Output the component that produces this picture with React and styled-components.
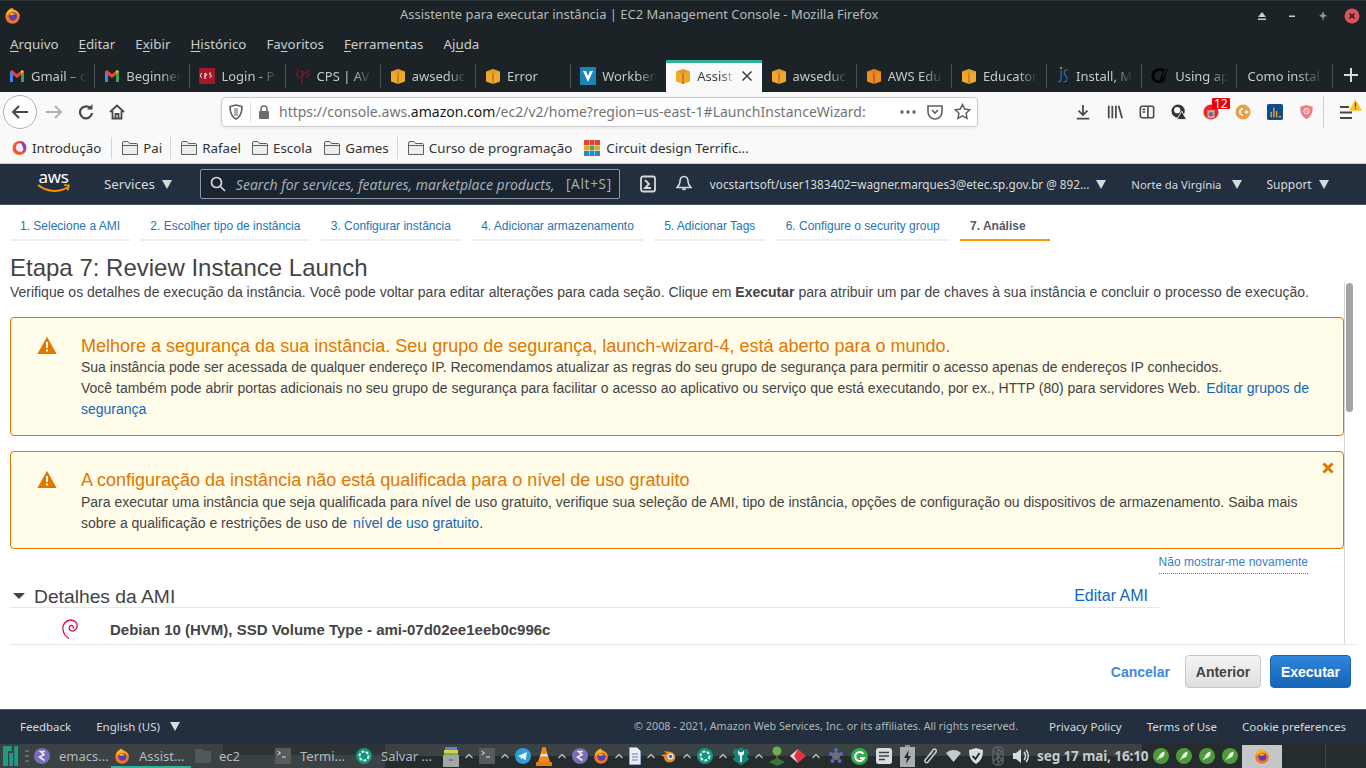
import React from 'react';
import styled, { createGlobalStyle } from 'styled-components';

const GlobalStyle = createGlobalStyle`
  html, body { margin: 0; padding: 0; background: #fff; overflow: hidden; }
  * { box-sizing: border-box; }
`;

const UI = `'Noto Sans', sans-serif`;
const WEB = `'Liberation Sans', Arial, sans-serif`;

const Page = styled.div`
  width: 1366px;
  height: 768px;
  display: flex;
  flex-direction: column;
  overflow: hidden;
  font-family: ${WEB};
`;

/* window chrome */
const TitleBar = styled.div`
  height: 30px;
  flex: none;
  background: #1b2326;
  border-top: 1px solid #2d3639;
  display: flex;
  align-items: center;
  position: relative;
  padding-left: 4px;
  color: #b4babc;
  font: 12.95px ${UI};
`;
const TitleText = styled.div`
  position: absolute;
  left: 400px;
  top: 4px;
  white-space: nowrap;
`;
const WindowButtons = styled.div`
  margin-left: auto;
  display: flex;
  align-items: center;
  gap: 14px;
  padding-right: 6px;
`;
const MenuBar = styled.div`
  height: 30px;
  flex: none;
  background: #1b2326;
  display: flex;
  align-items: center;
  gap: 20px;
  padding: 0 0 2px 10px;
  color: #c9cecf;
  font: 13.33px ${UI};
  u { text-underline-offset: 2px; }
`;
const TabStrip = styled.div`
  height: 32px;
  flex: none;
  background: #1b2326;
  display: flex;
  align-items: stretch;
`;
const Tab = styled.div`
  width: 95.2px;
  flex: none;
  display: flex;
  align-items: center;
  gap: 6px;
  padding: 0 9px 3px;
  position: relative;
  font: 13px ${UI};
  color: ${p => (p.$active ? '#3b3f42' : '#c4c9ca')};
  background: ${p => (p.$active ? '#f9f9fa' : 'transparent')};
  border-top: 3px solid ${p => (p.$active ? '#2eb398' : 'transparent')};
  svg { flex: none; }
  &::after {
    content: '';
    display: ${p => (p.$sep ? 'block' : 'none')};
    position: absolute;
    right: 0;
    top: 1px;
    bottom: 4px;
    width: 1px;
    background: #4c5457;
  }
`;
const TabTitle = styled.span`
  flex: 1;
  overflow: hidden;
  white-space: nowrap;
  margin-left: ${p => (p.$plain ? '1px' : '0')};
  mask-image: linear-gradient(to right, #000 65%, transparent 100%);
`;
const NewTab = styled.div`
  flex: 1;
  display: flex;
  align-items: center;
  justify-content: center;
  padding: 0 0 3px 4px;
`;
const NavBar = styled.div`
  height: 39px;
  flex: none;
  background: #f9f9fa;
  display: flex;
  align-items: center;
  padding-left: 3px;
`;
const BackButton = styled.div`
  width: 34px;
  height: 34px;
  border-radius: 50%;
  border: 1px solid #b1b1b3;
  background: #fff;
  display: flex;
  align-items: center;
  justify-content: center;
  flex: none;
`;
const NavIcons = styled.div`
  display: flex;
  align-items: center;
  gap: 15px;
  padding-left: 8px;
  flex: none;
`;
const UrlBar = styled.div`
  width: 757px;
  height: 30px;
  margin-left: 96px;
  flex: none;
  background: #fff;
  border: 1px solid #ccc;
  border-radius: 4px;
  box-shadow: 0 1px 3px rgba(0, 0, 0, 0.08);
  display: flex;
  align-items: center;
  padding: 0 6px 0 7px;
  gap: 7px;
  font: 14px ${UI};
  color: #737373;
  white-space: nowrap;
  svg { flex: none; }
`;
const UrlDivider = styled.span`
  width: 1px;
  height: 20px;
  background: #e0e0e1;
`;
const UrlText = styled.span`
  flex: 1;
  overflow: hidden;
  margin-left: 2px;
  b { font-weight: 400; color: #17181a; }
`;
const UrlActions = styled.div`
  display: flex;
  align-items: center;
  gap: 11px;
`;
const Toolbar = styled.div`
  margin-left: 97px;
  display: flex;
  align-items: center;
  gap: 16px;
  flex: none;
`;
const ToolbarSep = styled.span`
  width: 1px;
  height: 32px;
  background: #cfcfd1;
  margin: 0 -1px 0 -7px;
`;
const IconSlot = styled.div`
  position: relative;
  width: 16px;
  height: 16px;
`;
const Badge = styled.span`
  position: absolute;
  top: -6px;
  left: 9px;
  background: #e8000c;
  color: #fff;
  font: 12px/11px ${UI};
  padding: 0 2px;
  border-radius: 1px;
`;
const Warn = styled.svg`
  position: absolute;
  top: -5px;
  left: 10px;
`;
const Bookmarks = styled.div`
  height: 33px;
  flex: none;
  background: #f9f9fa;
  border-bottom: 1px solid #c9cacc;
  display: flex;
  align-items: center;
  padding: 2px 0 0 12px;
  font: 13.33px ${UI};
  color: #2f3335;
  white-space: nowrap;
`;
const Bookmark = styled.div`
  display: flex;
  align-items: center;
  gap: 5px;
  margin-right: ${p => p.$mr}px;
`;
const BookSep = styled.span`
  width: 1px;
  height: 22px;
  background: #d4d4d6;
  margin: 0 10px 0 0;
`;

/* aws header */
const AwsNav = styled.div`
  height: 41px;
  flex: none;
  background: #232f3e;
  border-bottom: 1px solid #46505c;
  display: flex;
  align-items: center;
  padding-left: 37px;
  color: #d5dbdb;
  font: 12px ${UI};
  white-space: nowrap;
`;
const Logo = styled.div`
  width: 33px;
  height: 30px;
  position: relative;
  color: #fff;
  font: 17px/20px ${UI};
  text-align: center;
  letter-spacing: -0.3px;
  margin-right: 34px;
  flex: none;
  top: -2px;
`;
const Smile = styled.svg`
  position: absolute;
  left: 0;
  top: 17px;
`;
const NavItem = styled.div`
  display: flex;
  align-items: center;
  gap: 6px;
  flex: none;
  margin-left: ${p => p.$ml || 0}px;
  margin-right: ${p => p.$mr || 0}px;
  font-size: ${p => p.$fs || 12}px;
`;
const Caret = styled.span`
  width: 0;
  height: 0;
  flex: none;
  border-left: 5px solid transparent;
  border-right: 5px solid transparent;
  border-top: 9px solid #d5dbdb;
  margin-left: ${p => p.$ml || 0}px;
`;
const SearchBox = styled.div`
  width: 420px;
  height: 30px;
  margin-left: 28px;
  flex: none;
  background: #1b2431;
  border: 1px solid #8d97a3;
  border-radius: 2px;
  display: flex;
  align-items: center;
  padding: 0 7px 0 9px;
  gap: 10px;
  color: #a5adb5;
  font-size: 14px;
  em { flex: 1; overflow: hidden; }
  span { letter-spacing: 0.7px; font-size: 13.5px; }
`;

/* wizard */
const Main = styled.div`
  flex: 1;
  min-height: 0;
  display: flex;
  flex-direction: column;
  background: #fff;
`;
const Steps = styled.div`
  display: flex;
  gap: 10.3px;
  padding: 7px 0 0 10px;
`;
const Step = styled.div`
  height: 29px;
  padding: ${p => (p.$active ? '0 24px 0 10px' : '0 10px')};
  display: flex;
  align-items: center;
  font: ${p => (p.$active ? 'bold' : 'normal')} 12px ${WEB};
  color: ${p => (p.$active ? '#545b64' : '#2574b8')};
  border-bottom: 2px solid ${p => (p.$active ? '#ff9900' : '#eeeeee')};
`;
const Heading = styled.h1`
  margin: 13px 0 0 10px;
  height: 29px;
  font: 400 24px/27px ${WEB};
  color: #444;
`;
const ScrollArea = styled.div`
  width: 1346px;
  height: 362px;
  margin-left: 10px;
  flex: none;
  position: relative;
  overflow: hidden;
  &::after {
    content: '';
    position: absolute;
    left: 1334px;
    top: 0;
    bottom: 0;
    width: 1px;
    background: #d8d8d8;
  }
`;
const ScrollThumb = styled.div`
  position: absolute;
  left: 1336px;
  top: 1px;
  width: 7px;
  height: 129px;
  border-radius: 4px;
  background: #a3a5a5;
`;
const Intro = styled.p`
  margin: 0;
  font: 14px/20px ${WEB};
  color: #444;
  white-space: nowrap;
`;
const Alert = styled.div`
  width: 1334px;
  height: ${p => p.$h}px;
  margin-top: ${p => p.$mt}px;
  position: relative;
  background: #fffcea;
  border: 1px solid #e07700;
  border-radius: 4px;
  padding: 18px 20px 0 70px;
  color: #444;
  font: 14px/21px ${WEB};
  a { color: #1166bb; margin-left: 2px; }
`;
const AlertIcon = styled.svg`
  position: absolute;
  left: 26px;
  top: 18px;
`;
const CloseIcon = styled.svg`
  position: absolute;
  right: 9px;
  top: 10px;
`;
const AlertTitle = styled.div`
  font: 18px/21px ${WEB};
  color: #e07700;
  margin-bottom: ${p => p.$gap || 0}px;
`;
const DontShow = styled.div`
  display: flex;
  justify-content: flex-end;
  padding: 6px 48px 0 0;
  a {
    font: 12px/15px ${WEB};
    color: #3b7fc4;
    padding-bottom: 3px;
    border-bottom: 1px dotted #3b7fc4;
  }
`;
const Section = styled.div`
  width: 1149px;
  height: 23px;
  margin-top: 11px;
  display: flex;
  align-items: center;
  border-bottom: 1px solid #e8e8e8;
  padding: 0 11px 0 3px;
`;
const Triangle = styled.span`
  width: 0;
  height: 0;
  border-left: 6px solid transparent;
  border-right: 6px solid transparent;
  border-top: 6px solid #444;
  margin-right: 9px;
`;
const SectionTitle = styled.span`
  font: 19.25px/24px ${WEB};
  color: #444;
  flex: 1;
  padding-top: 1px;
`;
const EditLink = styled.a`
  font: 16px/24px ${WEB};
  color: #1166bb;
`;
const AmiRow = styled.div`
  display: flex;
  align-items: center;
  height: 42px;
  padding-left: 51px;
  gap: 31px;
  font: bold 15px ${WEB};
  color: #444;
`;
const Actions = styled.div`
  margin: 0 10px;
  height: 65px;
  flex: none;
  border-top: 1px solid #e8e8e8;
  display: flex;
  justify-content: flex-end;
  align-items: flex-start;
  padding: 10px 5px 0 0;
  gap: 9px;
`;
const CancelLink = styled.a`
  font: bold 14px/34px ${WEB};
  color: #3f8ae0;
  margin-right: 6px;
`;
const Button = styled.div`
  height: 33px;
  width: ${p => p.$w}px;
  border-radius: 4px;
  display: flex;
  align-items: center;
  justify-content: center;
  font: bold 14px ${WEB};
  color: ${p => (p.$primary ? '#fff' : '#444')};
  border: 1px solid ${p => (p.$primary ? '#1a66b3' : '#c6c6c6')};
  background: ${p =>
    p.$primary
      ? 'linear-gradient(#2f86dd, #1664b4)'
      : 'linear-gradient(#f4f4f4, #dfdfdf)'};
`;

/* footers */
const Footer = styled.div`
  height: 35px;
  flex: none;
  background: #232f3e;
  border-top: 1px solid #545b64;
  display: flex;
  align-items: center;
  padding: 0 20px 2px;
  color: #d5dbdb;
  font: 11.5px ${UI};
  white-space: nowrap;
`;
const Copyright = styled.span`
  color: #aab7b8;
  font-size: 10.75px;
  margin-left: auto;
  margin-right: 31px;
`;
const FooterLink = styled.span`
  margin-left: 25px;
`;
const Taskbar = styled.div`
  height: 24px;
  flex: none;
  background:
    linear-gradient(#2c3436, #2c3436) 223px 0 / 162px 11px no-repeat,
    linear-gradient(#3a4244, #3a4244) 0 0 / 385px 100% no-repeat,
    linear-gradient(#3a4244, #3a4244) 385px 0 / 757px 12px no-repeat,
    #252c2e;
  display: flex;
  align-items: center;
  color: #b3b9ba;
  font: 13px ${UI};
  white-space: nowrap;
  position: relative;
  padding-left: 3px;
  svg { flex: none; }
`;
const TaskDots = styled.svg`
  margin: 0 5px 0 7px;
`;
const TaskItem = styled.div`
  display: flex;
  align-items: center;
  gap: ${p => p.$gap || 9}px;
  height: 24px;
  flex: none;
  width: ${p => p.$w}px;
  padding: 2px 0 0 ${p => p.$pl ?? 3}px;
  border-bottom: 2px solid ${p => (p.$active ? '#2eb398' : 'transparent')};
`;
const Tray = styled.div`
  display: flex;
  align-items: center;
  gap: ${p => p.$gap}px;
  margin-left: ${p => p.$ml}px;
  flex: none;
`;
const Clock = styled.span`
  font-weight: 700;
  font-size: 13.5px;
  color: #c6cbcc;
  margin-right: -3px;
  letter-spacing: -0.1px;
`;
const Thumbnail = styled.div`
  width: 40px;
  height: 23px;
  margin-left: 4px;
  background: #c3c7c8;
  display: flex;
  align-items: center;
  justify-content: center;
  flex: none;
`;
const TaskEnd = styled.span`
  position: absolute;
  left: 1325px;
  top: 0;
  bottom: 0;
  width: 1px;
  background: #3d4547;
`;

/* drawings */
const Firefox = ({ size = 16 }) => (
  <svg width={size} height={size} viewBox="0 0 16 16">
    <circle cx="8" cy="9" r="6.800" fill="#f4722b" />
    <path d="M2 8C2 4 5 1.500 8 .6c0 2 2 2.400 4 3.600 2 1.400 3 3 2.800 4.800-2-5-8-6-12.800-1z" fill="#ffb01f" />
    <circle cx="8.400" cy="8.800" r="3.900" fill="#5b3fb0" />
    <path d="M5 6.500c2-1.600 5-1 6 1-1-.4-3-.6-4 .4z" fill="#ffbd2e" />
  </svg>
);
const Gmail = () => (
  <svg width="16" height="16" viewBox="0 0 16 16">
    <path d="M1 3.500V14h3V7l4 3 4-3v7h3V3.500L13 2 8 6 3 2z" fill="#ea4335" />
    <path d="M1 3.500V14h3V6z" fill="#4285f4" />
    <path d="M15 3.500V14h-3V6z" fill="#34a853" />
    <path d="M12 6l3-2.500L13 2l-1 .8z" fill="#fbbc04" />
  </svg>
);
const Cube = ({ color = '#f0a92e', dark = '#c9851d' }) => (
  <svg width="16" height="17" viewBox="0 0 16 17">
    <path d="M8 1l7 2.500v10L8 16l-7-2.500v-10z" fill={color} />
    <path d="M7 5.200h2V16H7z" fill={dark} />
    <path d="M1 3.500L8 5.800l7-2.300-7-2.500z" fill={dark} opacity=".35" />
  </svg>
);
const CpsSolid = () => (
  <svg width="16" height="16" viewBox="0 0 16 16">
    <rect width="16" height="16" fill="#a5182a" />
    <path d="M3 5c-2 1-2 4 0 5M6 5v6M6 5.500c2-1 2 3 0 2.500M12 5c-2-.5-2 1.500-.5 2s1 2.500-1 2" fill="none" stroke="#fff" strokeWidth="1" />
  </svg>
);
const CpsLine = () => (
  <svg width="16" height="16" viewBox="0 0 16 16">
    <path d="M4 2C1 4 1 8 4 10M7 3v12M7 3.500c3-1 3 4 0 3.500M14 3c-3-.5-3 2-1 2.500s1 3.500-2 3" fill="none" stroke="#a5182a" strokeWidth="1" />
  </svg>
);
const Workbench = () => (
  <svg width="16" height="18" viewBox="0 0 16 18">
    <rect width="16" height="18" fill="#1a86b8" />
    <path d="M3 4l5 11 5-11h-3l-2 5-2-5z" fill="#fff" />
  </svg>
);
const JsLogo = () => (
  <svg width="14" height="18" viewBox="0 0 14 18">
    <path d="M5 3v9c0 2-1 3-3 3" fill="none" stroke="#2f6db5" strokeWidth="1.200" />
    <path d="M12 3C8 2 7 6 9.500 8.500s2 6-2 6.500" fill="none" stroke="#2f6db5" strokeWidth="1.200" />
    <circle cx="5" cy="1" r="1" fill="#e8a33d" />
  </svg>
);
const CIcon = () => (
  <svg width="18" height="16" viewBox="0 0 18 16">
    <path d="M13 3C8-1 1 3 2 9c.6 4 5 6 9 4l2-4" fill="none" stroke="#050505" strokeWidth="3" />
    <path d="M9 14L13 1M12 14l4-13" stroke="#050505" strokeWidth="1.500" />
  </svg>
);
const Tinker = () => (
  <svg width="17" height="16" viewBox="0 0 17 16">
    {['#e2442f', '#e2442f', '#e2442f', '#e5a52d', '#5aa83d', '#e5a52d', '#2f86c5', '#2f86c5', '#2f86c5'].map((c, i) => (
      <rect key={i} x={(i % 3) * 5.5} y={Math.floor(i / 3) * 5.5} width="5" height="5" fill={c} />
    ))}
  </svg>
);
const Folder = () => (
  <svg width="16" height="14" viewBox="0 0 16 14">
    <path d="M.5 13.500V2A1.500 1.500 0 0 1 2 .5h4l1.500 2h7A1 1 0 0 1 15.500 3.500v10z" fill="#ededed" stroke="#5d6163" />
    <path d="M.5 4.500h15" stroke="#5d6163" />
  </svg>
);
const Stroke = ({ w = 18, h = 18, vb, sw = 2, c = '#45494c', children }) => (
  <svg width={w} height={h} viewBox={vb || `0 0 ${w} ${h}`} fill="none" stroke={c} strokeWidth={sw}>
    {children}
  </svg>
);
const Chevron = () => (
  <svg width="10" height="8" viewBox="0 0 10 8" fill="none" stroke="#b3b9ba" strokeWidth="1.500">
    <path d="M1.500 6L5 2.500 8.500 6" />
  </svg>
);
const Terminal = () => (
  <svg width="16" height="16" viewBox="0 0 16 16">
    <rect width="16" height="16" rx="1" fill="#565b5d" />
    <path d="M2.500 3l3 2-3 2" fill="none" stroke="#e2e4e4" />
    <path d="M7 9h4" stroke="#e2e4e4" />
  </svg>
);
const Emacs = () => (
  <svg width="16" height="16" viewBox="0 0 16 16">
    <circle cx="8" cy="8" r="8" fill="#7a6cb8" />
    <path d="M11 3.500H6.500L10 6.500 5.500 9l5 3.500" fill="none" stroke="#eee" strokeWidth="1.600" />
  </svg>
);
const GreenCamera = () => (
  <svg width="16" height="16" viewBox="0 0 16 16">
    <circle cx="8" cy="8" r="8" fill="#12957f" />
    <circle cx="8" cy="8" r="4.500" fill="none" stroke="#e6f4f1" strokeWidth="2" strokeDasharray="3 1.500" />
  </svg>
);
const Rocket = () => (
  <svg width="16" height="16" viewBox="0 0 16 16">
    <circle cx="8" cy="8" r="8" fill="#4e9a3b" />
    <path d="M11.500 3.500c-3 .5-5 3-6 6l1.500 1c3-1 5-3 4.500-7zM5 9.500L3.800 12l2.500-1.200z" fill="#eef5ea" />
  </svg>
);
const AlertTriangle = () => (
  <AlertIcon width="20" height="19" viewBox="0 0 20 19">
    <path d="M10 .8L19.600 18H.4z" fill="#e07700" />
    <path d="M9 6h2v6H9zM9 13.500h2v2H9z" fill="#fffcea" />
  </AlertIcon>
);

const tabs = [
  [<Gmail />, 'Gmail – c'],
  [<Gmail />, 'Beginner'],
  [<CpsSolid />, 'Login - P'],
  [<CpsLine />, 'CPS | AV'],
  [<Cube />, 'awseduc'],
  [<Cube />, 'Error'],
  [<Workbench />, 'Workben'],
  [<Cube />, 'Assist', true],
  [<Cube />, 'awseduc'],
  [<Cube color="#f08a24" dark="#c4661a" />, 'AWS Edu'],
  [<Cube />, 'Educator'],
  [<JsLogo />, 'Install, M'],
  [<CIcon />, 'Using ap'],
  [null, 'Como instal'],
];

const steps = [
  '1. Selecione a AMI',
  '2. Escolher tipo de instância',
  '3. Configurar instância',
  '4. Adicionar armazenamento',
  '5. Adicionar Tags',
  '6. Configure o security group',
];

export default function App() {
  return (
    <Page>
      <GlobalStyle />
      <TitleBar>
        <Firefox size={17} />
        <TitleText>Assistente para executar instância | EC2 Management Console - Mozilla Firefox</TitleText>
        <WindowButtons>
          <svg width="16" height="12" viewBox="0 0 16 12"><path d="M8 2l4 5H4zM4 8.500h8V10H4z" fill="#c9cecf" /></svg>
          <svg width="16" height="12" viewBox="0 0 16 12"><path d="M5 5.500h6V7H5z" fill="#c9cecf" /></svg>
          <svg width="16" height="12" viewBox="0 0 16 12"><path d="M9 1l1 3 3 2-3 1-1 4-1-4-3-1 3-2z" fill="#8e9597" /></svg>
          <svg width="16" height="16" viewBox="0 0 16 16">
            <circle cx="8" cy="8" r="7.500" fill="#d9545f" />
            <path d="M5.500 5.500l5 5m0-5l-5 5" stroke="#2a1a1c" strokeWidth="1.500" />
          </svg>
        </WindowButtons>
      </TitleBar>
      <MenuBar>
        <span><u>A</u>rquivo</span>
        <span><u>E</u>ditar</span>
        <span>E<u>x</u>ibir</span>
        <span><u>H</u>istórico</span>
        <span>Fa<u>v</u>oritos</span>
        <span><u>F</u>erramentas</span>
        <span>Aj<u>u</u>da</span>
      </MenuBar>
      <TabStrip>
        {tabs.map(([icon, title, active], i) => (
          <Tab key={i} $active={active} $sep={!active && i !== 6}>
            {icon}
            <TabTitle $plain={!icon}>{title}</TabTitle>
            {active && (
              <svg width="12" height="12" viewBox="0 0 12 12">
                <path d="M1.500 1.500l9 9m0-9l-9 9" stroke="#3b3f42" strokeWidth="1.500" />
              </svg>
            )}
          </Tab>
        ))}
        <NewTab>
          <svg width="16" height="16" viewBox="0 0 16 16"><path d="M8 1v14M1 8h14" stroke="#d9dcdd" strokeWidth="2" /></svg>
        </NewTab>
      </TabStrip>
      <NavBar>
        <BackButton>
          <Stroke w={18} h={16}><path d="M17 8H2M8 2L2 8l6 6" /></Stroke>
        </BackButton>
        <NavIcons>
          <Stroke w={18} h={16} c="#b1b1b3"><path d="M1 8h15M10 2l6 6-6 6" /></Stroke>
          <Stroke w={16} h={16} sw={2.200}>
            <path d="M13 5A6 6 0 1 0 14 9" />
            <path d="M9 5.500h5.500V0" fill="#45494c" stroke="none" />
          </Stroke>
          <Stroke w={16} h={16} sw={1.800}>
            <path d="M1 8l7-6.500L15 8M3.500 7v7.500h9V7M6.500 14.500V10h3v4.500" />
          </Stroke>
        </NavIcons>
        <UrlBar>
          <Stroke w={14} h={16} sw={1.600} c="#5b5f62">
            <path d="M7 1l6 1.500c0 6-1 10-6 12.500C2 12.500 1 8.500 1 2.500z" />
            <path d="M7 4v8" strokeWidth="4" opacity=".5" />
          </Stroke>
          <UrlDivider />
          <svg width="12" height="14" viewBox="0 0 12 14">
            <path d="M3 6V4a3 3 0 0 1 6 0v2" fill="none" stroke="#6b6e71" strokeWidth="1.500" />
            <rect x="1" y="6" width="10" height="8" rx="1" fill="#6b6e71" />
          </svg>
          <UrlText>https://console.aws.<b>amazon.com</b>/ec2/v2/home?region=us-east-1#LaunchInstanceWizard:</UrlText>
          <UrlActions>
            <svg width="16" height="4" viewBox="0 0 16 4"><circle cx="2" cy="2" r="1.700" fill="#5b5f62" /><circle cx="8" cy="2" r="1.700" fill="#5b5f62" /><circle cx="14" cy="2" r="1.700" fill="#5b5f62" /></svg>
            <Stroke w={16} h={16} sw={1.600} c="#5b5f62">
              <path d="M1 2h14v6a7 7 0 0 1-14 0z" /><path d="M5 6l3 3 3-3" />
            </Stroke>
            <Stroke w={17} h={17} sw={1.500} c="#5b5f62">
              <path d="M8.500 1.500l2.200 4.600 5 .7-3.600 3.500.9 5-4.500-2.400L4 15.300l.9-5L1.300 6.800l5-.7z" />
            </Stroke>
          </UrlActions>
        </UrlBar>
        <Toolbar>
          <Stroke w={16} h={16} vb="0 0 18 18"><path d="M9 1v11M4 7.500L9 12.500l5-5M2 16.500h14" /></Stroke>
          <Stroke w={16} h={16} vb="0 0 18 18"><path d="M2 2v14M6 2v14M10 2v14M13 2l4 14" /></Stroke>
          <Stroke w={16} h={16} vb="0 0 18 18" sw={1.800}><rect x="1.500" y="2.500" width="15" height="13" rx="2" /><path d="M10 2.500v13M4 6h3M4 9h3" /></Stroke>
          <IconSlot>
            <svg width="16" height="16" viewBox="0 0 18 18">
              <circle cx="8" cy="8" r="7.500" fill="#2f3538" />
              <circle cx="7" cy="7" r="3.500" fill="#f9f9fa" />
              <path d="M12 8l5.500 9.500h-11z" fill="#2f3538" stroke="#f9f9fa" />
            </svg>
          </IconSlot>
          <IconSlot>
            <svg width="16" height="16" viewBox="0 0 18 18">
              <circle cx="9" cy="9" r="8.500" fill="#e8262c" />
              <rect x="5" y="7" width="8" height="9" fill="#d6a9a6" />
              <circle cx="9" cy="11.500" r="2.500" fill="#4c7a8c" />
            </svg>
            <Badge>12</Badge>
          </IconSlot>
          <svg width="16" height="16" viewBox="0 0 18 18">
            <circle cx="9" cy="9" r="8.500" fill="#eaa23f" />
            <path d="M9 5.500A3.500 3.500 0 1 0 9 12.500" fill="none" stroke="#fff" strokeWidth="1.800" />
            <path d="M11 9h4M13 7v4" stroke="#fff" strokeWidth="1.500" />
          </svg>
          <svg width="16" height="16" viewBox="0 0 18 18">
            <rect width="18" height="18" rx="2" fill="#0f4c8a" />
            <path d="M4 15V9h1.500v6zM7 15V4h1.500v11zM10 15V8h1.500v7zM13 15v-1.500h3V15z" fill="#f3a82c" />
          </svg>
          <svg width="15" height="16" viewBox="0 0 16 18">
            <path d="M8 1l7 2c0 7-1.500 11-7 14C2.500 14 1 10 1 3z" fill="#ee7d83" />
            <circle cx="8" cy="8" r="3" fill="none" stroke="#fff" strokeWidth="1" />
            <path d="M6 6l4 4" stroke="#fff" />
          </svg>
          <ToolbarSep />
          <IconSlot>
            <Stroke w={14} h={16} vb="0 0 14 16"><path d="M1 3h9M1 8.500h12M1 14h12" /></Stroke>
            <Warn width="13" height="12" viewBox="0 0 18 16">
              <path d="M9 0l9 16H0z" fill="#fdc32a" />
              <path d="M8.200 5h1.600v6H8.200zM8.200 12h1.600v2H8.200z" fill="#5a4300" />
            </Warn>
          </IconSlot>
        </Toolbar>
      </NavBar>
      <Bookmarks>
        <Bookmark $mr={10}>
          <svg width="15" height="16" viewBox="0 0 16 16">
            <circle cx="8" cy="8" r="7.500" fill="#f0592c" />
            <circle cx="8.600" cy="7.400" r="4.500" fill="#f4f0ff" />
            <path d="M8 .5c4 0 7 3 7 7 0 2-1 4-3 5 1-4-1-8-4-12z" fill="#8a3ec2" />
          </svg>
          Introdução
        </Bookmark>
        <BookSep />
        <Bookmark $mr={8}><Folder />Pai</Bookmark>
        <BookSep />
        <Bookmark $mr={11}><Folder />Rafael</Bookmark>
        <Bookmark $mr={12}><Folder />Escola</Bookmark>
        <Bookmark $mr={8}><Folder />Games</Bookmark>
        <BookSep />
        <Bookmark $mr={12}><Folder />Curso de programação</Bookmark>
        <Bookmark $mr={0}><Tinker />Circuit design Terrific...</Bookmark>
      </Bookmarks>
      <AwsNav>
        <Logo>
          aws
          <Smile width="33" height="9" viewBox="0 0 33 9" fill="none">
            <path d="M1 1c9 7 21 8 30 2" stroke="#ff9900" strokeWidth="2" />
            <path d="M27 1l5 .5-1.500 5" stroke="#ff9900" strokeWidth="1.500" />
          </Smile>
        </Logo>
        <NavItem $fs={13.33}>Services<Caret $ml={1} /></NavItem>
        <SearchBox>
          <svg width="16" height="16" viewBox="0 0 16 16" fill="none" stroke="#d5dbdb" strokeWidth="1.700">
            <circle cx="6.500" cy="6.500" r="5" /><path d="M10.500 10.500L15 15" />
          </svg>
          <em>Search for services, features, marketplace products,</em>
          <span>[Alt+S]</span>
        </SearchBox>
        <NavItem $ml={20} $mr={20}>
          <svg width="16" height="18" viewBox="0 0 16 18" fill="none" stroke="#d5dbdb" strokeWidth="1.800">
            <rect x="1" y="1.500" width="14" height="15" rx="2" />
            <path d="M5 5l4 4-4 4h6" />
          </svg>
        </NavItem>
        <NavItem $mr={18}>
          <svg width="16" height="18" viewBox="0 0 16 18" fill="none" stroke="#d5dbdb" strokeWidth="1.600">
            <path d="M8 1.500c-3 0-4 2-4 5 0 3-1 4-3 6h14c-2-2-3-3-3-6 0-3-1-5-4-5zM6.500 13.500a1.600 1.600 0 0 0 3 0" />
          </svg>
        </NavItem>
        <NavItem $mr={25} $fs={11.72}>vocstartsoft/user1383402=wagner.marques3@etec.sp.gov.br @ 892...<Caret $ml={1} /></NavItem>
        <NavItem $mr={24} $fs={11.3}>Norte da Virgínia<Caret $ml={5} /></NavItem>
        <NavItem>Support<Caret $ml={1} /></NavItem>
      </AwsNav>
      <Main>
        <Steps>
          {steps.map(s => <Step key={s}>{s}</Step>)}
          <Step $active>7. Análise</Step>
        </Steps>
        <Heading>Etapa 7: Review Instance Launch</Heading>
        <ScrollArea>
          <ScrollThumb />
          <Intro>
            Verifique os detalhes de execução da instância. Você pode voltar para editar alterações para cada seção. Clique em <b>Executar</b> para atribuir um par de chaves à sua instância e concluir o processo de execução.
          </Intro>
          <Alert $h={119} $mt={15}>
            <AlertTriangle />
            <AlertTitle>Melhore a segurança da sua instância. Seu grupo de segurança, launch-wizard-4, está aberto para o mundo.</AlertTitle>
            Sua instância pode ser acessada de qualquer endereço IP. Recomendamos atualizar as regras do seu grupo de segurança para permitir o acesso apenas de endereços IP conhecidos.
            <br />
            Você também pode abrir portas adicionais no seu grupo de segurança para facilitar o acesso ao aplicativo ou serviço que está executando, por ex., HTTP (80) para servidores Web. <a>Editar grupos de segurança</a>
          </Alert>
          <Alert $h={98} $mt={15}>
            <AlertTriangle />
            <CloseIcon width="12" height="12" viewBox="0 0 12 12">
              <path d="M1.500 1.500l9 9m0-9l-9 9" stroke="#e07700" strokeWidth="3" />
            </CloseIcon>
            <AlertTitle $gap={1}>A configuração da instância não está qualificada para o nível de uso gratuito</AlertTitle>
            Para executar uma instância que seja qualificada para nível de uso gratuito, verifique sua seleção de AMI, tipo de instância, opções de configuração ou dispositivos de armazenamento. Saiba mais sobre a qualificação e restrições de uso de <a>nível de uso gratuito</a>.
          </Alert>
          <DontShow><a>Não mostrar-me novamente</a></DontShow>
          <Section>
            <Triangle />
            <SectionTitle>Detalhes da AMI</SectionTitle>
            <EditLink>Editar AMI</EditLink>
          </Section>
          <AmiRow>
            <svg width="18" height="22" viewBox="0 0 18 22" fill="none" stroke="#d70a53" strokeWidth="1.300">
              <path d="M9 2c5 0 8 3 7 7-.7 3-4 5-6.500 3.500-2-1.200-1.500-4.500.5-5 2-.5 3 1.500 2 3" />
              <path d="M9 2C4 3 1 7 2 12c.6 3.500 2.500 6.500 6 8.500" />
            </svg>
            Debian 10 (HVM), SSD Volume Type - ami-07d02ee1eeb0c996c
          </AmiRow>
        </ScrollArea>
        <Actions>
          <CancelLink>Cancelar</CancelLink>
          <Button $w={76}>Anterior</Button>
          <Button $w={81} $primary>Executar</Button>
        </Actions>
      </Main>
      <Footer>
        <span>Feedback</span>
        <NavItem $ml={25} $fs={11.5}>English (US)<Caret $ml={4} /></NavItem>
        <Copyright>© 2008 - 2021, Amazon Web Services, Inc. or its affiliates. All rights reserved.</Copyright>
        <span>Privacy Policy</span>
        <FooterLink>Terms of Use</FooterLink>
        <FooterLink>Cookie preferences</FooterLink>
      </Footer>
      <Taskbar>
        <svg width="15" height="20" viewBox="0 0 12 20" preserveAspectRatio="none" fill="#1f9c85">
          <path d="M0 0h7v5H4v15H0zM5 7h3v13H5zM9 0h3v20H9z" />
        </svg>
        <TaskDots width="4" height="14" viewBox="0 0 4 14">
          <path d="M0 2h4M0 7h4M0 12h4" stroke="#8d9394" />
        </TaskDots>
        <TaskItem $w={77} $pl={0}><Emacs />emacs...</TaskItem>
        <TaskItem $w={80} $active><Firefox />Assist...</TaskItem>
        <TaskItem $w={81} $pl={4} $gap={8}>
          <svg width="16" height="14" viewBox="0 0 16 14"><path d="M0 14V0h7l2 2h7v12z" fill="#525859" /></svg>
          ec2
        </TaskItem>
        <TaskItem $w={81}><Terminal />Termi...</TaskItem>
        <TaskItem $w={78}><GreenCamera />Salvar ...</TaskItem>
        <Tray $gap={5} $ml={12}>
          <svg width="16" height="22" viewBox="0 0 16 22">
            <path d="M2 2h12v3H2z" fill="#4a8fd1" /><path d="M1 5h14v3H1z" fill="#e8c94a" /><path d="M1 8h14v3H1z" fill="#67b26b" />
            <rect y="10" width="16" height="12" fill="#a3a7a8" /><path d="M6 15h4" stroke="#4a4f50" />
          </svg>
          <Chevron /><Terminal /><Chevron />
          <svg width="16" height="16" viewBox="0 0 16 16">
            <circle cx="8" cy="8" r="8" fill="#2f9ed8" />
            <path d="M3 8l9-4-1.500 8.500L7.500 10 6 11.500 5.700 9.300z" fill="#eef7fc" />
          </svg>
          <svg width="16" height="20" viewBox="0 0 16 20">
            <path d="M6.500 1h3L14 16H2z" fill="#f08a1d" /><path d="M5 8h6l.7 2.500H4.300z" fill="#f5e9d8" />
            <rect y="16" width="16" height="4" fill="#e67a10" />
          </svg>
          <Chevron /><Emacs /><Firefox /><Chevron />
          <svg width="12" height="18" viewBox="0 0 12 18">
            <path d="M0 0h8l4 4v14H0z" fill="#e8edf5" stroke="#3c5c96" /><path d="M3 7h6M3 10h6M3 13h6" stroke="#6b7fa6" />
          </svg>
          <Chevron />
          <svg width="16" height="14" viewBox="0 0 16 14">
            <path d="M0 6l6-1L3 2l7 1c3 1 5 4 4 7-1 3-5 4-8 3-2-1-3-3-3-5z" fill="#ee8a1a" />
            <circle cx="9.500" cy="7.500" r="3" fill="#eef1f3" /><circle cx="9.500" cy="7.500" r="1.800" fill="#2d6eb0" />
          </svg>
          <Chevron /><GreenCamera /><Chevron />
          <svg width="16" height="18" viewBox="0 0 16 18">
            <path d="M8 0l3 2 4 0 1 4-2 3 2 3-3 3-5 3-5-3-3-3 2-3-2-3 1-4h4z" fill="#13857a" />
            <path d="M5 3v4l2 2v6h2V9l2-2V3L9.500 5h-3z" fill="#e8eeed" />
          </svg>
          <Chevron />
          <svg width="16" height="20" viewBox="0 0 16 20">
            <path d="M8 12l8 4-8 4-8-4z" fill="#2c7a3b" /><rect x="7" y="7" width="2" height="8" fill="#6d5a3e" />
            <circle cx="8" cy="5" r="4.500" fill="#6cb04b" />
          </svg>
          <svg width="16" height="16" viewBox="0 0 16 16">
            <path d="M8 1l8 7-8 7-8-7z" fill="#e0353f" /><path d="M8 1L0 8l8 7-4-7z" fill="#dcdcdc" />
          </svg>
          <Chevron />
        </Tray>
        <Tray $gap={8} $ml={8}>
          <svg width="14" height="16" viewBox="0 0 14 16" fill="#5f6bb0">
            <circle cx="7" cy="8" r="4" fill="#6a6f79" /><circle cx="7" cy="2" r="2" /><circle cx="2" cy="6" r="2" /><circle cx="12" cy="6" r="2" /><circle cx="3.500" cy="13" r="2" /><circle cx="10.500" cy="13" r="2" />
          </svg>
          <svg width="17" height="17" viewBox="0 0 17 17">
            <circle cx="8.500" cy="8.500" r="8.500" fill="#35ab4a" />
            <path d="M12.500 6A4.500 4.500 0 1 0 13 10H9" fill="none" stroke="#fff" strokeWidth="2" />
          </svg>
          <svg width="16" height="16" viewBox="0 0 16 16">
            <rect width="16" height="16" rx="2.500" fill="#d9dddd" /><path d="M3 4.500h10M3 8h10M3 11.500h6" stroke="#3b4244" strokeWidth="1.700" />
          </svg>
          <svg width="15" height="22" viewBox="0 0 15 22">
            <rect x="5" y="0" width="5" height="2" fill="#8c9293" /><rect y="2" width="15" height="20" fill="#a8aeae" />
            <path d="M9 5L4 13h3l-1 6 5-8H8z" fill="#262c2e" />
          </svg>
          <Stroke w={15} h={18} sw={1.500} c="#c6cbcc">
            <path d="M3 12l7-9c2-2 4 0 3 2l-8 10c-1 1.500-4 0-3-2l7-8" />
          </Stroke>
          <svg width="15" height="12" viewBox="0 0 15 12"><path d="M0 3c4-4 11-4 15 0l-7.500 9z" fill="#c6cbcc" /></svg>
          <svg width="14" height="16" viewBox="0 0 14 16">
            <path d="M7 0l7 2c0 7-2 11-7 14C2 13 0 9 0 2z" fill="#d8dcdc" /><path d="M3.500 8l3 3 4-6" fill="none" stroke="#262c2e" strokeWidth="1.800" />
          </svg>
          <svg width="14" height="20" viewBox="0 0 14 20" fill="none" stroke="#5c6365" strokeWidth="1.500">
            <rect x="2" y="1" width="10" height="18" rx="4" /><path d="M3 5l8 9-4 3V3l4 3-8 9" />
          </svg>
          <svg width="16" height="16" viewBox="0 0 16 16">
            <path d="M0 5h3l5-4v14l-5-4H0z" fill="#d8dcdc" /><path d="M11 4c2 2 2 6 0 8M13 2c3 3 3 9 0 12" fill="none" stroke="#d8dcdc" strokeWidth="1.500" />
          </svg>
          <Clock>seg 17 mai, 16:10</Clock>
          <Tray $gap={7} $ml={0}>
            <Rocket /><Rocket /><Rocket /><Rocket />
          </Tray>
        </Tray>
        <Thumbnail><Firefox /></Thumbnail>
        <TaskEnd />
      </Taskbar>
    </Page>
  );
}
